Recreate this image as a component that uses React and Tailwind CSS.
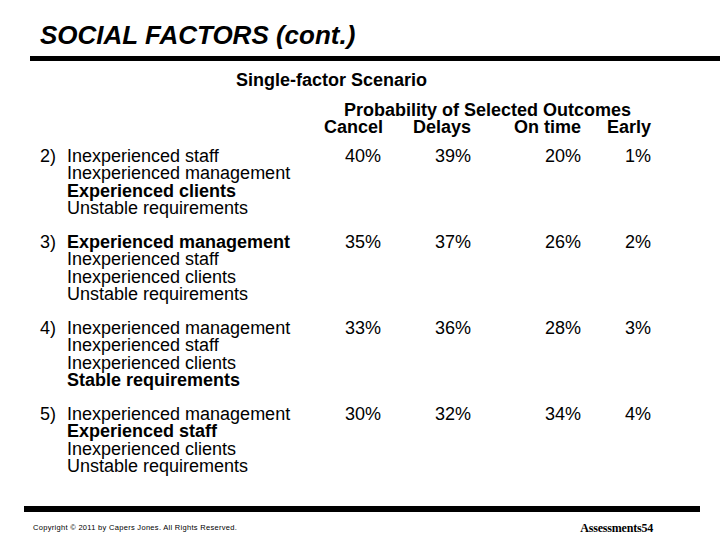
const rows = [
  {
    n: "2)",
    lines: [
      ["Inexperienced staff", false],
      ["Inexperienced management", false],
      ["Experienced clients", true],
      ["Unstable requirements", false],
    ],
    vals: ["40%", "39%", "20%", "1%"],
  },
  {
    n: "3)",
    lines: [
      ["Experienced management", true],
      ["Inexperienced staff", false],
      ["Inexperienced clients", false],
      ["Unstable requirements", false],
    ],
    vals: ["35%", "37%", "26%", "2%"],
  },
  {
    n: "4)",
    lines: [
      ["Inexperienced management", false],
      ["Inexperienced staff", false],
      ["Inexperienced clients", false],
      ["Stable requirements", true],
    ],
    vals: ["33%", "36%", "28%", "3%"],
  },
  {
    n: "5)",
    lines: [
      ["Inexperienced management", false],
      ["Experienced staff", true],
      ["Inexperienced clients", false],
      ["Unstable requirements", false],
    ],
    vals: ["30%", "32%", "34%", "4%"],
  },
];

const cols = "grid grid-cols-[284px_57px_90px_110px_70px]";

const App = () => {
  return (
    <div className="w-[720px] h-[540px] bg-white text-black overflow-hidden flex flex-col font-['Liberation_Sans',Arial,sans-serif]">
      <h1 className="pl-[40px] pt-[20px] text-[26px] leading-[30px] font-bold italic">
        SOCIAL FACTORS (cont.)
      </h1>
      <div className="ml-[30px] mt-[6px] h-[5px] bg-black"></div>

      <div className="pl-[236px] mt-[10px] text-[18px] leading-[18px] font-bold">
        Single-factor Scenario
      </div>

      <div className="pl-[40px] mt-[13px] text-[18px] leading-[17px] font-bold">
        <div className={cols}>
          <div></div>
          <div className="col-span-4 text-center">Probability of Selected Outcomes</div>
        </div>
        <div className={cols}>
          <div></div>
          <div className="text-right">Cancel</div>
          <div className="text-right">Delays</div>
          <div className="text-right">On time</div>
          <div className="text-right">Early</div>
        </div>
      </div>

      <div className="pl-[40px] mt-[12px] flex flex-col gap-[16.7px] text-[18px] leading-[17.33px]">
        {rows.map((r) => (
          <div key={r.n} className={cols}>
            <div className="flex">
              <span className="w-[27px]">{r.n}</span>
              <div className="flex flex-col">
                {r.lines.map(([t, b], i) => (
                  <span key={i} className={b ? "font-bold" : ""}>
                    {t}
                  </span>
                ))}
              </div>
            </div>
            {r.vals.map((v, i) => (
              <div key={i} className="text-right">
                {v}
              </div>
            ))}
          </div>
        ))}
      </div>

      <div className="mt-auto">
        <div className="ml-[24px] w-[676px] h-[6px] bg-black"></div>
        <div className="flex items-center justify-between pl-[33px] pr-[67px] h-[28px] pt-[4px]">
          <span className="text-[7.5px] tracking-[0.3px]">
            Copyright © 2011 by Capers Jones. All Rights Reserved.
          </span>
          <span className="text-[12px] font-bold tracking-[-0.2px] font-['Liberation_Serif',serif]">
            Assessments54
          </span>
        </div>
      </div>
    </div>
  );
};

export default App;
